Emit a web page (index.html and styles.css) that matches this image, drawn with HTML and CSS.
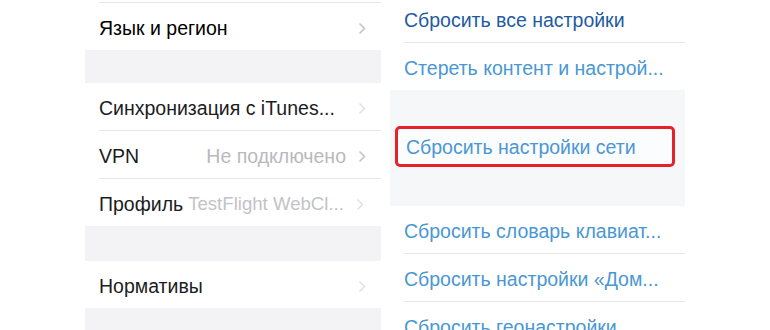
FILE: index.html
```html
<!DOCTYPE html>
<html lang="ru">
<head>
    <meta charset="UTF-8">
    <title>Настройки</title>
    <link rel="stylesheet" href="styles.css">
</head>
<body>
    <div class="screen">
        <div class="panel left">
            <div class="top-line"></div>
            <div class="row">
                <span class="label dark">Язык и регион</span>
                <svg class="chev" width="8" height="13" viewBox="0 0 8 13"><polyline points="1.5,1.5 6.5,6.5 1.5,11.5"/></svg>
            </div>
            <div class="gap-section"></div>
            <div class="row sep">
                <span class="label">Синхронизация с iTunes...</span>
                <svg class="chev faint" width="8" height="13" viewBox="0 0 8 13"><polyline points="1.5,1.5 6.5,6.5 1.5,11.5"/></svg>
            </div>
            <div class="row sep">
                <span class="label">VPN</span>
                <span class="value">Не подключено</span>
                <svg class="chev" width="8" height="13" viewBox="0 0 8 13"><polyline points="1.5,1.5 6.5,6.5 1.5,11.5"/></svg>
            </div>
            <div class="row">
                <span class="label">Профиль</span>
                <span class="value inline">TestFlight WebCl...</span>
                <svg class="chev faint" width="8" height="13" viewBox="0 0 8 13"><polyline points="1.5,1.5 6.5,6.5 1.5,11.5"/></svg>
            </div>
            <div class="gap-section tall"></div>
            <div class="row">
                <span class="label">Нормативы</span>
                <svg class="chev faint" width="8" height="13" viewBox="0 0 8 13"><polyline points="1.5,1.5 6.5,6.5 1.5,11.5"/></svg>
            </div>
            <div class="gap-section rest"></div>
        </div>

        <div class="panel right">
            <div class="row sep first">
                <span class="link strong">Сбросить все настройки</span>
            </div>
            <div class="row">
                <span class="link">Стереть контент и настрой...</span>
            </div>
            <div class="network-section">
                <div class="marked">
                    <span class="link">Сбросить настройки сети</span>
                </div>
            </div>
            <div class="row sep">
                <span class="link">Сбросить словарь клавиат...</span>
            </div>
            <div class="row sep">
                <span class="link">Сбросить настройки «Дом...</span>
            </div>
            <div class="row">
                <span class="link">Сбросить геонастройки</span>
            </div>
        </div>
    </div>
</body>
</html>
```

FILE: styles.css
```css
body {
    margin: 0;
    background-color: #ffffff;
    font-family: "Liberation Sans", Arial, sans-serif;
    overflow: hidden;
}
.screen {
    display: flex;
    gap: 9px;
    padding-left: 85px;
    height: 330px;
    overflow: hidden;
}
.panel {
    display: flex;
    flex-direction: column;
    flex: none;
}
.left {
    width: 296px;
}
.right {
    width: 295px;
}
.top-line {
    height: 2px;
    margin-left: 14px;
    border-bottom: 1px solid #e4e4e7;
}
.row {
    display: flex;
    align-items: center;
    box-sizing: border-box;
    margin-left: 14px;
    padding-top: 3px;
    padding-right: 15px;
    height: 47px;
    flex: none;
    font-size: 19.5px;
    white-space: nowrap;
}
.row.sep {
    height: 48px;
    border-bottom: 1px solid #e6e6e9;
}
.label {
    color: #1c1c1e;
}
.label.dark {
    color: #000000;
}
.value {
    margin-left: auto;
    color: #b9b9bd;
}
.value.inline {
    margin-left: 5px;
    font-size: 18.6px;
    color: #c3c3c7;
}
.chev {
    margin-left: auto;
    flex: none;
}
.value + .chev {
    margin-left: 12px;
}
.chev polyline {
    fill: none;
    stroke: #c4c4c8;
    stroke-width: 1.6;
}
.chev.faint polyline {
    stroke: #e2e2e5;
}
.gap-section {
    height: 33px;
    flex: none;
    background-color: #f3f3f6;
}
.gap-section.tall {
    height: 35px;
}
.gap-section.rest {
    flex: 1;
}
.first {
    margin-top: -5px;
}
.link {
    color: #4a97d4;
}
.link.strong {
    color: #1f5b9f;
}
.network-section {
    flex: none;
    height: 116px;
    background-color: #f5f7f9;
    padding-top: 36px;
    box-sizing: border-box;
}
.marked {
    display: flex;
    align-items: center;
    box-sizing: border-box;
    margin-left: 5px;
    width: 280px;
    height: 41px;
    padding-left: 8px;
    padding-top: 2px;
    border: 3px solid #e5222b;
    border-radius: 5px;
    background-color: #fbfcfd;
    font-size: 19.5px;
}
```
